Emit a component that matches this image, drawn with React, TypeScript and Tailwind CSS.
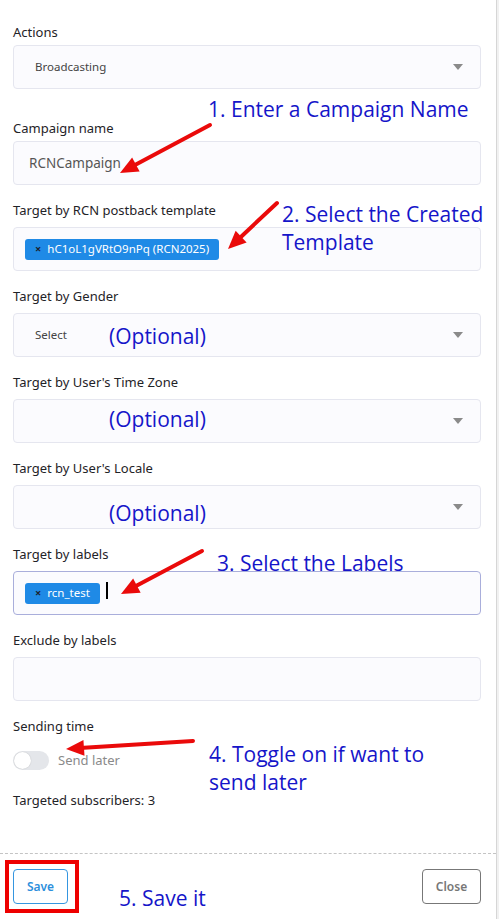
// Broadcast campaign form, annotated with step-by-step hints.
import React from "react";

const ui = { fontFamily: '"Noto Sans", "Open Sans", Arial, sans-serif' };
const note = { fontFamily: '"Open Sans", "Noto Sans", Arial, sans-serif' };

function Caret() {
  return (
    <svg width="10" height="6" viewBox="0 0 10 6" className="shrink-0">
      <path d="M0 0h10L5 6z" fill="#8a8a8a" />
    </svg>
  );
}

function Field({
  label,
  children,
  focused = false,
  tight = false,
}: {
  label: string;
  children?: React.ReactNode;
  focused?: boolean;
  tight?: boolean;
}) {
  return (
    <div>
      <div className={"h-[18px] text-[13px] leading-[18px] text-[#1f2328] " + (tight ? "mb-1" : "mb-2")}>
        {label}
      </div>
      <div
        className={
          "flex h-[44px] items-center rounded-[4px] border bg-[#fbfbfe] " +
          (focused ? "border-[#a9aedb]" : "border-[#e5e6ef]")
        }
      >
        {children}
      </div>
    </div>
  );
}

function Chip({ text }: { text: string }) {
  return (
    <span className="ml-[11px] inline-flex h-[21px] items-center gap-[6px] rounded-[3px] bg-[#1f8ae6] pl-[10px] pr-[10px] text-[11.5px] text-white">
      <span className="text-[11px] font-bold text-[#1b2430]">×</span>
      {text}
    </span>
  );
}

function Arrow({ x1, y1, x2, y2 }: { x1: number; y1: number; x2: number; y2: number }) {
  // line from tail (x1,y1) to tip (x2,y2) with a filled head
  const dx = x2 - x1;
  const dy = y2 - y1;
  const len = Math.hypot(dx, dy);
  const ux = dx / len;
  const uy = dy / len;
  const hl = 18;
  const hw = 8;
  const bx = x2 - ux * hl;
  const by = y2 - uy * hl;
  const pts = `${x2},${y2} ${bx - uy * hw},${by + ux * hw} ${bx + uy * hw},${by - ux * hw}`;
  return (
    <g>
      <line x1={x1} y1={y1} x2={bx} y2={by} stroke="#ea0a0a" strokeWidth="4" strokeLinecap="round" />
      <polygon points={pts} fill="#ea0a0a" />
    </g>
  );
}

function Note({ className, children }: { className: string; children: React.ReactNode }) {
  return (
    <div className={"absolute text-[21px] leading-[28px] text-[#1515c9] " + className} style={note}>
      {children}
    </div>
  );
}

export default function App() {
  return (
    <div className="relative flex h-[919px] w-[499px] overflow-hidden bg-white" style={ui}>
      <div className="flex w-[497px] flex-col border-r border-[#d6d6d6]">
        <div className="flex flex-col gap-4 px-[13px] pt-[23px] pr-[15px]">
          <div className="mb-[14px]">
            <Field label="Actions" tight>
              <div className="flex w-full items-center justify-between pl-[21px] pr-[17px]">
                <span className="text-[11.5px] text-[#444]">Broadcasting</span>
                <Caret />
              </div>
            </Field>
          </div>
          <Field label="Campaign name" tight>
            <span className="pl-[15px] text-[13.5px] text-[#555]">RCNCampaign</span>
          </Field>
          <Field label="Target by RCN postback template">
            <Chip text="hC1oL1gVRtO9nPq (RCN2025)" />
          </Field>
          <Field label="Target by Gender">
            <div className="flex w-full items-center justify-between pl-[21px] pr-[17px]">
              <span className="text-[11.5px] text-[#444]">Select</span>
              <Caret />
            </div>
          </Field>
          <Field label="Target by User's Time Zone">
            <div className="flex w-full justify-end pr-[17px]">
              <Caret />
            </div>
          </Field>
          <Field label="Target by User's Locale">
            <div className="flex w-full justify-end pr-[17px]">
              <Caret />
            </div>
          </Field>
          <Field label="Target by labels" focused>
            <Chip text="rcn_test" />
            <span className="ml-[6px] mb-[6px] h-[17px] w-[2px] bg-black" />
          </Field>
          <Field label="Exclude by labels" />
          <div className="h-[18px] text-[13px] leading-[18px] text-[#1f2328]">Sending time</div>
          <div className="flex h-[19px] items-center gap-[9px]">
            <span className="relative h-[19px] w-[36px] rounded-full bg-[#e4e6ea]">
              <span className="absolute left-[1px] top-[1px] h-[17px] w-[17px] rounded-full bg-white shadow-[0_0_1px_rgba(0,0,0,0.25)]" />
            </span>
            <span className="text-[13px] text-[#8a8a8a]">Send later</span>
          </div>
          <div className="mt-[5px] h-[18px] text-[13px] leading-[18px] text-[#1f2328]">Targeted subscribers: 3</div>
        </div>
        <div className="mt-[44px] border-t border-dashed border-[#c4c4c4]" />
        <div className="flex items-center justify-between px-[13px] pr-[15px] pt-[15px]">
          <button className="h-[35px] w-[55px] rounded-[4px] border border-[#3596e0] text-[12px] font-semibold text-[#2d8fdc]">
            Save
          </button>
          <button className="h-[35px] w-[59px] rounded-[4px] border border-[#777] text-[12px] font-semibold text-[#777]">
            Close
          </button>
        </div>
      </div>
      <div className="flex-1 bg-[#f1f1f1]" />

      {/* annotations */}
      <svg className="pointer-events-none absolute inset-0" width="499" height="919">
        <Arrow x1={210} y1={125} x2={120} y2={173} />
        <Arrow x1={277} y1={203} x2={228} y2={249} />
        <Arrow x1={202} y1={551} x2={121} y2={594} />
        <Arrow x1={193} y1={741} x2={66} y2={749} />
      </svg>
      <div className="pointer-events-none absolute left-[5px] top-[860px] h-[53px] w-[74px] border-[4px] border-[#ee0000]" />
      <Note className="left-[208px] top-[95px]">1. Enter a Campaign Name</Note>
      <Note className="left-[282px] top-[200px]">
        2. Select the Created
        <br />
        Template
      </Note>
      <Note className="left-[109px] top-[322px]">(Optional)</Note>
      <Note className="left-[109px] top-[405px]">(Optional)</Note>
      <Note className="left-[109px] top-[499px]">(Optional)</Note>
      <Note className="left-[217px] top-[549px]">3. Select the Labels</Note>
      <Note className="left-[209px] top-[740px]">
        4. Toggle on if want to
        <br />
        send later
      </Note>
      <Note className="left-[119px] top-[884px]">5. Save it</Note>
    </div>
  );
}
